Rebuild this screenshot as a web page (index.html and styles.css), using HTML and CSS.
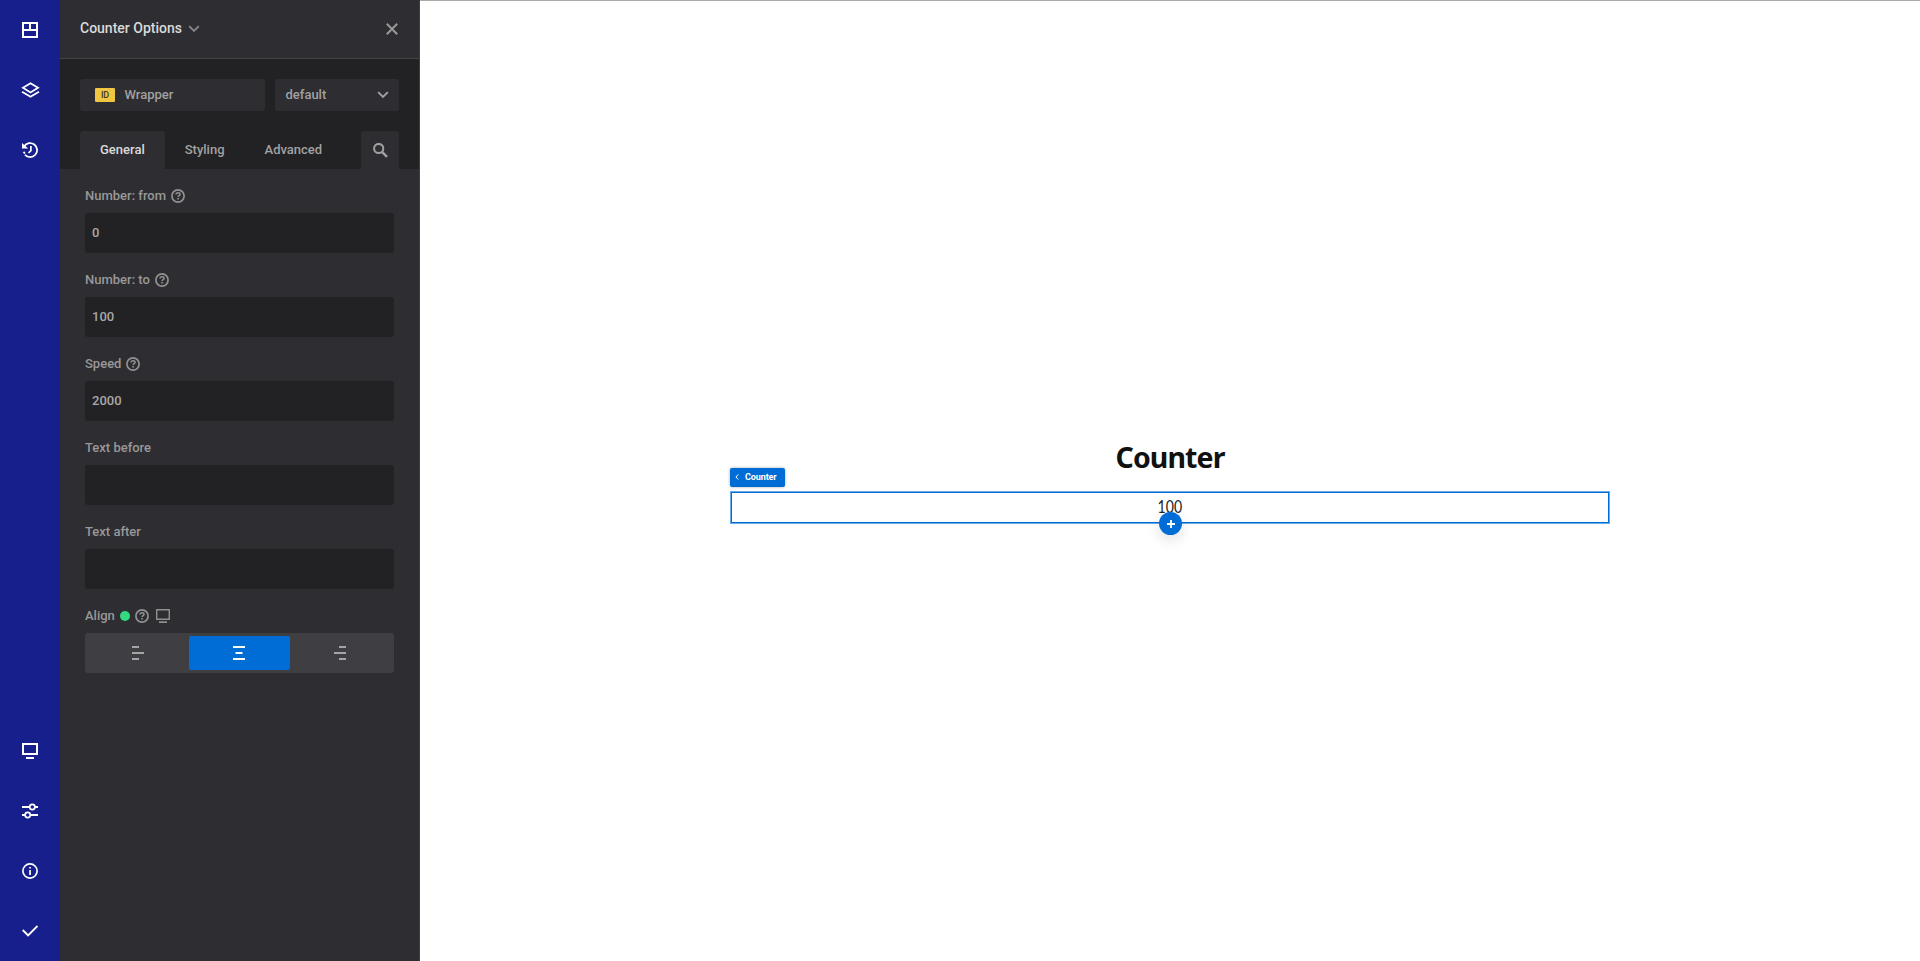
FILE: index.html
```
<!DOCTYPE html>
<html lang="en">
<head>
<meta charset="utf-8">
<title>Counter Options</title>
<link rel="stylesheet" href="styles.css">
</head>
<body>
<svg class="defs" width="0" height="0">
  <symbol id="help" viewBox="0 0 14 14"><circle cx="7" cy="7" r="6.100" fill="none" stroke="currentColor" stroke-width="1.700"/><path d="M5 5.600c0-1.200.8-1.800 2-1.800s2 .7 2 1.600c0 1.200-1.900 1.200-1.900 2.600" fill="none" stroke="currentColor" stroke-width="1.500"/><path d="M6.200 9h1.700v1.500H6.200z" fill="currentColor"/></symbol>
</svg>
<div class="app">
  <nav class="rail">
    <div class="rail-group">
      <a class="rail-item"><svg width="16" height="16" viewBox="0 0 16 16"><path d="M1 1h14v14H1zM1 8h14M8 1v7" fill="none" stroke="#fff" stroke-width="2"/></svg></a>
      <a class="rail-item"><svg width="20" height="18" viewBox="0 0 20 18"><path d="M10.500 2.200L18 6.800L10.500 11.400L3 6.800zM2 10.800L10.500 15.800L19 10.800" fill="none" stroke="#fff" stroke-width="1.800"/></svg></a>
      <a class="rail-item"><svg width="16" height="16" viewBox="0 0 16 16"><path d="M2.200 4.300A7 7 0 1 1 3 12.900" fill="none" stroke="#fff" stroke-width="1.800"/><path d="M0 1v5.500h6.200zM.8 10l1.900-.5.9 1.600-1.400 1.200z" fill="#fff"/><path d="M8.900 4v4.700L6.500 11" fill="none" stroke="#fff" stroke-width="1.700"/></svg></a>
    </div>
    <div class="rail-group">
      <a class="rail-item"><svg width="16" height="16" viewBox="0 0 16 16"><path d="M1 1h14v10H1z" fill="none" stroke="#fff" stroke-width="2"/><path d="M4 14h8v2H4z" fill="#fff"/></svg></a>
      <a class="rail-item"><svg width="16" height="16" viewBox="0 0 16 16"><g fill="none" stroke="#fff"><path d="M0 4h7.500M13 4h3M0 12h3M8.500 12H16" stroke-width="2"/><circle cx="10.300" cy="4" r="2.600" stroke-width="1.700"/><circle cx="5.700" cy="12" r="2.600" stroke-width="1.700"/></g></svg></a>
      <a class="rail-item"><svg width="16" height="16" viewBox="0 0 16 16"><circle cx="8" cy="8" r="7.100" fill="none" stroke="#fff" stroke-width="1.700"/><path d="M7.200 4h1.700v1.500H7.200zM7.200 7h1.700v5H7.200z" fill="#fff"/></svg></a>
      <a class="rail-item"><svg width="16" height="16" viewBox="0 0 16 16"><path d="M.7 7l5.400 5.400L15.500 3" fill="none" stroke="#fff" stroke-width="1.900"/></svg></a>
    </div>
  </nav>

  <aside class="panel">
    <header class="panel-head">
      <div class="title">Counter Options <svg width="12" height="8" viewBox="0 0 12 8"><path d="M1.200 1.200L6 6l4.800-4.800" fill="none" stroke="currentColor" stroke-width="1.900"/></svg></div>
      <svg class="close" width="12" height="12" viewBox="0 0 12 12"><path d="M.8.8l10.400 10.400M11.200.8L.8 11.200" stroke="currentColor" stroke-width="2"/></svg>
    </header>
    <div class="panel-top">
      <div class="selectors">
        <div class="box wrapper"><span class="id">ID</span>Wrapper</div>
        <div class="box state">default <svg width="12" height="8" viewBox="0 0 12 8"><path d="M1.200 1.200L6 6l4.800-4.800" fill="none" stroke="currentColor" stroke-width="1.900"/></svg></div>
      </div>
      <div class="tabs">
        <a class="tab active">General</a><a class="tab">Styling</a><a class="tab">Advanced</a>
        <a class="tab search"><svg width="15" height="15" viewBox="0 0 15 15"><circle cx="5.700" cy="5.500" r="4.600" fill="none" stroke="currentColor" stroke-width="2"/><path d="M9 8.800l5 5" stroke="currentColor" stroke-width="2.400"/></svg></a>
      </div>
    </div>
    <div class="fields">
      <div class="field"><div class="label">Number: from <svg class="help"><use href="#help"/></svg></div><div class="input">0</div></div>
      <div class="field"><div class="label">Number: to <svg class="help"><use href="#help"/></svg></div><div class="input">100</div></div>
      <div class="field"><div class="label">Speed <svg class="help"><use href="#help"/></svg></div><div class="input">2000</div></div>
      <div class="field"><div class="label">Text before</div><div class="input"></div></div>
      <div class="field"><div class="label">Text after</div><div class="input"></div></div>
      <div class="field">
        <div class="label">Align <span class="dot"></span><svg class="help"><use href="#help"/></svg><svg class="device" width="14" height="14" viewBox="0 0 14 14"><path d="M.7.7h12.600v9.600H.7z" fill="none" stroke="currentColor" stroke-width="1.500"/><path d="M3 12.300h8v1.700H3z" fill="currentColor"/></svg></div>
        <div class="segments">
          <a class="segment"><svg width="12" height="14" viewBox="0 0 12 14"><path d="M0 1h7M0 7h12M0 13h7" stroke="currentColor" stroke-width="2"/></svg></a>
          <a class="segment on"><svg width="12" height="14" viewBox="0 0 12 14"><path d="M0 1h12M2.500 7h7M0 13h12" stroke="currentColor" stroke-width="2"/></svg></a>
          <a class="segment"><svg width="12" height="14" viewBox="0 0 12 14"><path d="M5 1h7M0 7h12M5 13h7" stroke="currentColor" stroke-width="2"/></svg></a>
        </div>
      </div>
    </div>
  </aside>

  <main class="canvas">
    <section class="block">
      <h2>Counter</h2>
      <div class="element">
        <div class="tag"><svg width="4" height="6" viewBox="0 0 4 6"><path d="M3.300.5L.9 3l2.400 2.500" fill="none" stroke="#fff" stroke-width="1"/></svg>Counter</div>
        <span class="number">100</span>
        <div class="add"><svg width="8" height="8" viewBox="0 0 8 8"><path d="M4 0v8M0 4h8" stroke="#fff" stroke-width="1.800"/></svg></div>
      </div>
    </section>
  </main>
</div>
</body>
</html>
```
FILE: styles.css
```
* { box-sizing: border-box; }
body { margin: 0; background: #fff; font: 500 13px/20px Roboto, sans-serif; }
svg { display: block; flex: none; }
.defs { position: absolute; }
.app { display: flex; height: 961px; overflow: hidden; }

.rail { width: 60px; background: #171f8c; display: flex; flex-direction: column; justify-content: space-between; }
.rail-item { height: 60px; display: flex; align-items: center; justify-content: center; }

.panel { width: 360px; background: #2e2d32; border-right: 1px solid #3e3d42; color: #a1a1a1; }
.panel-head { height: 59px; padding: 0 21px 2px 20px; border-bottom: 1px solid #434247; display: flex; align-items: center; justify-content: space-between; }
.title { display: flex; align-items: center; gap: 6px; font-size: 14px; color: #dadada; }
.title svg { color: #858585; margin-top: 2px; }
.close { color: #999; margin-top: 2px; }
.panel-top { height: 110px; background: #222224; padding: 20px 20px 0 20px; }
.selectors { display: flex; gap: 10px; }
.box { height: 32px; border-radius: 3px; background: #2e2d32; display: flex; align-items: center; }
.wrapper { width: 185px; padding-left: 15px; gap: 9.500px; }
.id { width: 20px; height: 14px; border-radius: 1px; background: #f0c541; color: #3e3a2a; font-size: 9px; line-height: 15px; text-align: center; letter-spacing: -.2px; }
.state { width: 124px; padding: 0 10px 0 10.500px; justify-content: space-between; }
.tabs { display: flex; margin-top: 20px; }
.tab { height: 38px; padding: 0 20px; border-radius: 3px 3px 0 0; line-height: 37px; }
.active { background: #2e2d32; color: #dadada; }
.search { width: 38px; margin-left: auto; padding: 12px 0 0 12px; background: #2e2d32; }

.fields { padding: 16px 25px 0; display: grid; gap: 16px; }
.field { height: 68px; }
.label { height: 22px; margin-bottom: 6px; display: flex; align-items: center; gap: 5px; color: #989898; }
.help { width: 14px; height: 14px; color: #929292; }
.input { height: 40px; border-radius: 3px; background: #222224; padding: 0 7px; line-height: 39px; color: #a8a8a8; }
.dot { width: 10px; height: 10px; border-radius: 50%; background: #34d881; }
.device { margin-left: 2px; color: #8e8e8e; }
.segments { height: 40px; padding: 3px; border-radius: 3px; background: #3f3e43; display: grid; grid-template-columns: repeat(3, 1fr); }
.segment { display: flex; align-items: center; justify-content: center; padding-right: 1px; border-radius: 2px; color: #a5a5a5; }
.on { background: #006dd7; color: #fff; }

.canvas { flex: 1; border-top: 1px solid #aaa; padding-top: 434px; }
.block { width: 880px; margin: 0 auto; }
h2 { margin: 0; height: 56px; font: 700 28.500px/45px "Noto Sans", sans-serif; letter-spacing: -.9px; text-align: center; color: #111; }
.element { position: relative; height: 33px; border: 1px solid #69a9e7; box-shadow: inset 0 0 0 1px #006dd7; text-align: center; }
.number { display: inline-block; font: 400 17px/29px Lato, sans-serif; color: #222; transform: scaleX(.83); }
.tag { position: absolute; left: -1px; top: -24px; width: 55px; height: 19px; display: flex; align-items: center; gap: 6px; padding: 0 0 1px 5px; border-radius: 2px; background: #006dd7; box-shadow: 0 0 3px rgba(0,0,0,.35); color: #fff; font-size: 9px; font-weight: 700; letter-spacing: -.1px; line-height: 17px; }
.add { position: absolute; left: 50%; bottom: -12px; width: 23px; height: 23px; margin-left: -11px; display: flex; align-items: center; justify-content: center; border-radius: 50%; background: #006dd7; box-shadow: 0 5px 14px rgba(0,0,0,.12); }
```
